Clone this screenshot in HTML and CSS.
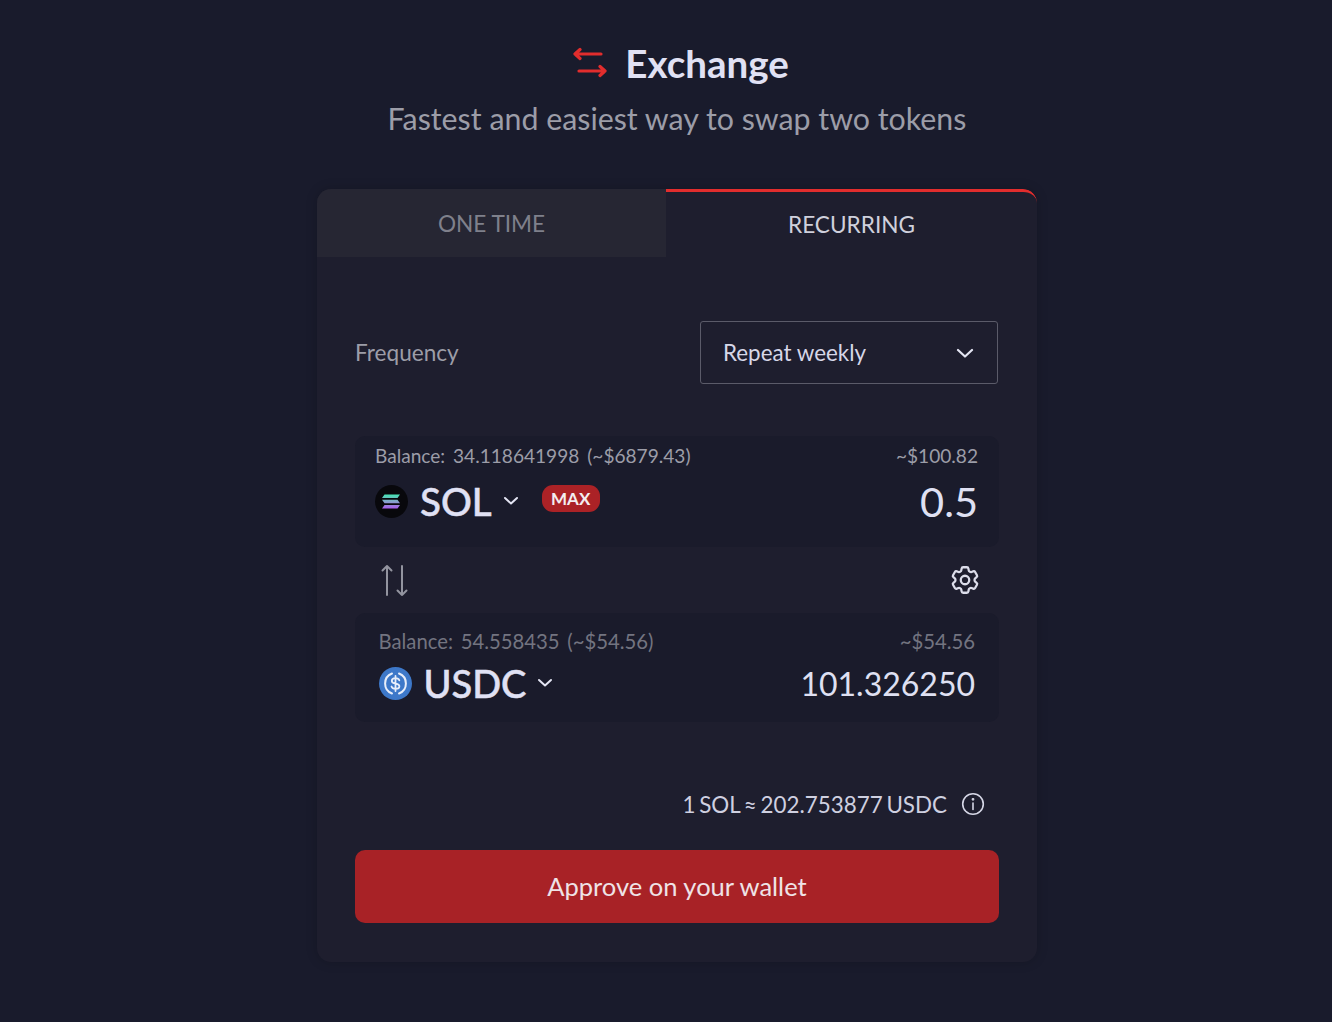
FILE: index.html
```html
<!DOCTYPE html>
<html lang="en">
<head>
<meta charset="utf-8">
<title>Exchange</title>
<link rel="stylesheet" href="styles.css">
</head>
<body>
<main class="page">
  <header class="head">
    <h1 class="title">
      <svg class="title-icon" width="34" height="32" viewBox="0 0 34 32" fill="none" stroke="#e22d2d" stroke-width="3.200" stroke-linecap="round" stroke-linejoin="round"><path d="M28 7H2M7 2.500 2 7l5 4.500"/><path d="M6 24h26M27 19.500l5 4.500-5 4.500"/></svg>
      <span>Exchange</span>
    </h1>
    <p class="subtitle">Fastest and easiest way to swap two tokens</p>
  </header>
  <section class="card">
    <div class="tabs">
      <div class="tab tab-off">ONE TIME</div>
      <div class="tab tab-on">RECURRING</div>
    </div>
    <div class="body">
      <div class="freq">
        <span class="freq-label">Frequency</span>
        <div class="select">
          <span>Repeat weekly</span>
          <svg width="18" height="10" viewBox="0 0 18 10" fill="none" stroke="#e4e5f3" stroke-width="2.200" stroke-linecap="round" stroke-linejoin="round"><path d="M2 2l7 6.500L16 2"/></svg>
        </div>
      </div>
      <div class="box box-from">
        <div class="box-top"><span>Balance: 34.118641998 (~$6879.43)</span><span>~$100.82</span></div>
        <div class="box-main">
          <div class="token">
            <svg class="coin" width="33" height="33" viewBox="0 0 33 33"><defs><linearGradient id="sol" x1="0" y1="0" x2="0" y2="1"><stop offset="0" stop-color="#43e6b2"/><stop offset=".5" stop-color="#86a3cc"/><stop offset="1" stop-color="#a95cec"/></linearGradient></defs><circle cx="16.500" cy="16.500" r="16.500" fill="#08080c"/><path d="M9.500 9.500H25l-2.500 3.600H7zM7 14.800h15.500l2.500 3.500H9.500zM9.500 20H25l-2.500 3.500H7z" fill="url(#sol)"/></svg>
            <span class="sym sym-sol">SOL</span>
            <svg class="caret" width="16" height="10" viewBox="0 0 16 10" fill="none" stroke="#e4e5f3" stroke-width="2" stroke-linecap="round" stroke-linejoin="round"><path d="M2 2l6 5.500L14 2"/></svg>
            <span class="max">MAX</span>
          </div>
          <span class="amount">0.5</span>
        </div>
      </div>
      <div class="tools">
        <svg width="28" height="34" viewBox="0 0 28 34" fill="none" stroke="#93949f" stroke-width="2" stroke-linecap="round" stroke-linejoin="round"><path d="M7 32V3M2.500 7.500 7 3l4.500 4.500"/><path d="M22 3v29M17.500 27.500 22 32l4.500-4.500"/></svg>
        <svg width="34" height="34" viewBox="0 0 24 24" fill="none" stroke="#dcddea" stroke-width="1.600" stroke-linecap="round" stroke-linejoin="round"><path d="M9.594 3.940c.09-.542.56-.94 1.110-.94h2.593c.55 0 1.020.398 1.110.94l.213 1.281c.063.374.313.686.645.870.074.04.147.083.22.127.325.196.72.257 1.075.124l1.217-.456a1.125 1.125 0 0 1 1.370.49l1.296 2.247a1.125 1.125 0 0 1-.26 1.431l-1.003.827c-.293.241-.438.613-.43.992a7.723 7.723 0 0 1 0 .255c-.008.378.137.75.43.991l1.004.827c.424.35.534.955.26 1.430l-1.298 2.247a1.125 1.125 0 0 1-1.369.491l-1.217-.456c-.355-.133-.75-.072-1.076.124a6.470 6.470 0 0 1-.22.128c-.331.183-.581.495-.644.869l-.213 1.281c-.09.543-.56.94-1.110.94h-2.594c-.55 0-1.019-.398-1.110-.94l-.213-1.281c-.062-.374-.312-.686-.644-.87a6.520 6.520 0 0 1-.22-.127c-.325-.196-.72-.257-1.076-.124l-1.217.456a1.125 1.125 0 0 1-1.369-.49l-1.297-2.247a1.125 1.125 0 0 1 .26-1.431l1.004-.827c.292-.24.437-.613.43-.991a6.932 6.932 0 0 1 0-.255c.007-.38-.138-.751-.43-.992l-1.004-.827a1.125 1.125 0 0 1-.26-1.430l1.297-2.247a1.125 1.125 0 0 1 1.370-.491l1.216.456c.356.133.751.072 1.076-.124.072-.044.146-.086.22-.128.332-.183.582-.495.644-.869l.214-1.280Z"/><circle cx="12" cy="12" r="3"/></svg>
      </div>
      <div class="box box-to">
        <div class="box-top dim"><span>Balance: 54.558435 (~$54.56)</span><span>~$54.56</span></div>
        <div class="box-main">
          <div class="token">
            <svg class="coin" width="33" height="33" viewBox="0 0 33 33" fill="none"><circle cx="16.500" cy="16.500" r="16.500" fill="#3d78c9"/><path d="M13 6.500a10.700 10.700 0 0 0 0 20M20 6.500a10.700 10.700 0 0 1 0 20" stroke="#e8eefa" stroke-width="2" stroke-linecap="round"/><path d="M20.300 13.300c-.5-1.400-2-2.100-3.800-2.100-2.200 0-3.700 1.100-3.700 2.700 0 3.700 7.600 1.700 7.600 5.300 0 1.600-1.600 2.600-3.900 2.600-2 0-3.500-.8-4-2.300M16.500 9v15" stroke="#e8eefa" stroke-width="1.800" stroke-linecap="round"/></svg>
            <span class="sym sym-usdc">USDC</span>
            <svg class="caret" width="16" height="10" viewBox="0 0 16 10" fill="none" stroke="#e4e5f3" stroke-width="2" stroke-linecap="round" stroke-linejoin="round"><path d="M2 2l6 5.500L14 2"/></svg>
          </div>
          <span class="amount amount-to">101.326250</span>
        </div>
      </div>
      <div class="rate">
        <span>1 SOL ≈ 202.753877 USDC</span>
        <svg width="24" height="24" viewBox="0 0 24 24" fill="none" stroke="#d6d7e6" stroke-width="1.600" stroke-linecap="round"><circle cx="12" cy="12" r="10.300"/><path d="M12 11v6.500"/><circle cx="12" cy="7.300" r=".6" fill="#d6d7e6"/></svg>
      </div>
      <button class="approve" type="button">Approve on your wallet</button>
    </div>
  </section>
</main>
</body>
</html>
```
FILE: styles.css
```css
* { box-sizing: border-box; }
html, body { margin: 0; height: 100%; }
body {
  background: #191b2c;
  color: #dcddee;
  font-family: Lato, "Open Sans", sans-serif;
}
.page {
  width: 1332px;
  height: 1022px;
  overflow: hidden;
  display: flex;
  flex-direction: column;
  align-items: center;
  padding: 38px 0 0 22px;
}
.head { text-align: center; height: 151px; }
.title {
  margin: 0;
  height: 50px;
  display: flex;
  align-items: center;
  justify-content: center;
  gap: 18px;
  padding-left: 8px;
  font-size: 38.500px;
  font-weight: 700;
  color: #e0e1f4;
}
.subtitle {
  margin: 5px 0 0;
  font-size: 30.350px;
  line-height: 50px;
  color: #9c9da8;
}
.card {
  width: 720px;
  height: 773px;
  background: #1e1e2e;
  border-radius: 14px;
  box-shadow: 0 0 12px rgba(0, 0, 0, .18);
  overflow: hidden;
}
.tabs { display: flex; height: 68px; }
.tab {
  display: flex;
  align-items: center;
  justify-content: center;
  font-size: 22.600px;
}
.tab-off { width: 349px; background: #262633; color: #7f808b; }
.tab-on {
  flex: 1;
  color: #cfd0dc;
  border-top: 3.500px solid #e22d2d;
  border-top-right-radius: 14px;
}
.body { padding: 64px 38px 0; }
.freq {
  display: flex;
  justify-content: space-between;
  align-items: center;
  height: 63px;
}
.freq-label { font-size: 22.600px; color: #9c9da8; }
.select {
  width: 298px;
  height: 63px;
  margin-right: 1px;
  border: 1px solid #5b5b69;
  border-radius: 3px;
  display: flex;
  align-items: center;
  justify-content: space-between;
  padding: 0 23px 0 22px;
  font-size: 22.400px;
  color: #d6d7e8;
}
.box {
  background: #1a1b2b;
  border-radius: 10px;
}
.box-from { margin-top: 52px; height: 111px; padding: 7px 21px 0 20px; }
.box-to { height: 109px; padding: 15px 24px 0 23.500px; }
.box-top {
  display: flex;
  justify-content: space-between;
  font-size: 19.100px;
  line-height: 26px;
  word-spacing: 3px;
  color: #9c9da8;
}
.box-top.dim { color: #737480; font-size: 20.300px; word-spacing: 2.500px; }
.box-main {
  display: flex;
  justify-content: space-between;
  align-items: center;
  height: 58px;
  margin-top: 3px;
}
.box-to .box-main { margin-top: 0; }
.token { display: flex; align-items: center; }
.coin { margin-right: 12px; }
.sym { font-weight: 500; color: #e0e1f4; -webkit-text-stroke: .5px #e0e1f4; }
.sym-sol { font-size: 38.500px; }
.sym-usdc { font-size: 38px; }
.caret { margin-left: 11px; }
.max {
  margin-left: 23px;
  margin-bottom: 5px;
  width: 58px;
  height: 27px;
  border-radius: 11px;
  background: #ab2226;
  color: #f3eef0;
  font-size: 17px;
  font-weight: 700;
  display: flex;
  align-items: center;
  justify-content: center;
}
.amount { font-size: 41.500px; color: #dfe0f2; }
.amount-to { font-size: 32px; }
.tools {
  height: 66px;
  display: flex;
  justify-content: space-between;
  align-items: center;
  padding: 0 17px 0 25px;
}
.rate {
  margin-top: 63px;
  height: 38px;
  display: flex;
  justify-content: flex-end;
  align-items: center;
  gap: 14px;
  padding-right: 14px;
  font-size: 22.400px;
  word-spacing: -2px;
  color: #cfd0e0;
}
.approve {
  display: block;
  width: 100%;
  height: 73px;
  margin-top: 27px;
  padding-bottom: 3px;
  border: 0;
  border-radius: 10px;
  background: #a82226;
  color: #efe3e6;
  font-family: inherit;
  font-size: 25.500px;
}
```
